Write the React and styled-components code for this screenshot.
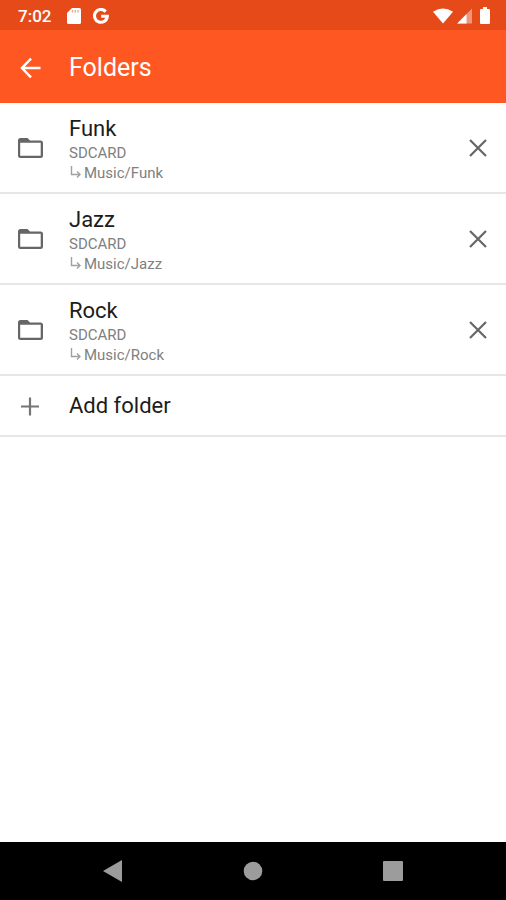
import React, { useState } from "react";
import styled, { createGlobalStyle } from "styled-components";

const GlobalStyle = createGlobalStyle`
  * {
    box-sizing: border-box;
  }
  body {
    margin: 0;
    font-family: Roboto, "Noto Sans", sans-serif;
    background-color: #fff;
  }
  button {
    padding: 0;
    border: none;
    background: none;
    font: inherit;
    color: inherit;
    cursor: pointer;
  }
  svg {
    display: block;
  }
`;

const Screen = styled.div`
  display: flex;
  flex-direction: column;
  min-height: 100vh;
`;
const StatusBar = styled.div`
  display: flex;
  align-items: center;
  height: 30px;
  padding: 1px 16px 0 18px;
  background-color: #e64a19;
  color: #fff;
`;
const Clock = styled.span`
  font-size: 17px;
  font-weight: 500;
  line-height: 20px;
  margin-right: 16px;
`;
const StatusIcons = styled.div`
  display: flex;
  align-items: center;
  gap: ${(props) => props.$gap}px;
`;
const Spacer = styled.div`
  flex: 1;
`;
const AppBar = styled.header`
  display: flex;
  align-items: center;
  height: 73px;
  padding: 2px 15px 0;
  background-color: #ff5722;
  color: #fff;
`;
const BackBtn = styled.button`
  width: 30px;
  height: 30px;
  margin-right: 24px;
`;
const Title = styled.h1`
  margin: 0;
  font-size: 25px;
  font-weight: 400;
  line-height: 32px;
`;
const List = styled.ul`
  flex: 1;
  margin: 0;
  padding: 0;
  list-style: none;
`;
const Row = styled.li`
  display: flex;
  align-items: center;
  height: 91px;
  padding: 0 12px 0 15px;
  border-bottom: 2px solid #e6e6e6;
  color: #666;
`;
const RowText = styled.div`
  flex: 1;
  margin-left: 24px;
  padding-top: 2px;
`;
const Name = styled.div`
  font-size: 22px;
  line-height: 28px;
  color: #1c1c1c;
`;
const Detail = styled.div`
  display: flex;
  align-items: center;
  font-size: 15px;
  line-height: 20px;
  color: #808080;
`;
const RemoveBtn = styled.button`
  width: 32px;
  height: 32px;
`;
const AddItem = styled.li`
  border-bottom: 2px solid #e6e6e6;
`;
const AddBtn = styled.button`
  display: flex;
  align-items: center;
  gap: 24px;
  width: 100%;
  height: 59px;
  padding: 0 15px;
  text-align: left;
  color: #757575;
`;
const NavBar = styled.nav`
  display: flex;
  align-items: center;
  justify-content: space-evenly;
  height: 58px;
  background-color: #000;
`;
const NavBtn = styled.button`
  display: flex;
  align-items: center;
  justify-content: center;
  width: 54px;
  height: 54px;
`;

function SdCardIcon() {
  return (
    <svg width="14" height="16" viewBox="0 0 14 16">
      <path d="M5 0h7.5Q14 0 14 1.5v13q0 1.5-1.5 1.5h-11Q0 16 0 14.5V5z" fill="#fff" />
      <path d="M5.500 2v2.500M8.200 2v2.500M11 2v2.500" stroke="#f0a68d" strokeWidth="1.4" />
    </svg>
  );
}

function GoogleIcon() {
  return (
    <svg width="16" height="16" viewBox="0 0 16 16" fill="none" stroke="#fff" strokeWidth="3.1">
      <path d="M12.700 3.600A6.400 6.400 0 1 0 14.300 8.300H8.200" />
    </svg>
  );
}

function WifiIcon() {
  return (
    <svg width="20" height="16" viewBox="0 0 20 16">
      <path d="M0 3.800Q10-2.600 20 3.800L10 15.500z" fill="#fff" />
    </svg>
  );
}

function SignalIcon() {
  return (
    <svg width="15" height="16" viewBox="0 0 15 16">
      <path d="M15 .5V15.500H.2z" fill="#f1967a" />
      <path d="M9.500 6V15.500H.2z" fill="#fff" />
    </svg>
  );
}

function BatteryIcon() {
  return (
    <svg width="10" height="17" viewBox="0 0 10 17">
      <path d="M3 0h4v2h2q1 0 1 1v13q0 1-1 1H1q-1 0-1-1V3q0-1 1-1h2z" fill="#fff" />
    </svg>
  );
}

function BackIcon() {
  return (
    <svg width="30" height="30" viewBox="0 0 30 30" fill="none" stroke="#fff" strokeWidth="2.5">
      <path d="M25.500 15H8M16 5.700L7 15l9 9.300" />
    </svg>
  );
}

function FolderIcon() {
  return (
    <svg width="30" height="30" viewBox="0 0 30 30">
      <path
        d="M5.500 5h7l2.500 2.500h10.500q2.500 0 2.500 2.500v12.500q0 2.500-2.500 2.500h-20q-2.500 0-2.500-2.500v-15q0-2.500 2.500-2.500zM5.200 9.700v13h20.500v-13z"
        fill="currentColor"
        fillRule="evenodd"
      />
    </svg>
  );
}

function CloseIcon() {
  return (
    <svg width="32" height="32" viewBox="0 0 32 32" stroke="currentColor" strokeWidth="2.2">
      <path d="M8 8l16 16M24 8L8 24" />
    </svg>
  );
}

function PlusIcon() {
  return (
    <svg width="30" height="30" viewBox="0 0 30 30" stroke="currentColor" strokeWidth="2.200">
      <path d="M15 6.500v18M6 15.500h18" />
    </svg>
  );
}

function SubPathIcon() {
  return (
    <svg width="15" height="14" viewBox="0 0 15 14" fill="none" stroke="#a0a0a0" strokeWidth="1.400">
      <path d="M2.500 0v8.500h8.500M8 5.500l3 3-3 3" />
    </svg>
  );
}

const initialFolders = [
  { name: "Funk", storage: "SDCARD", path: "Music/Funk" },
  { name: "Jazz", storage: "SDCARD", path: "Music/Jazz" },
  { name: "Rock", storage: "SDCARD", path: "Music/Rock" },
];

export default function App() {
  const [folders, setFolders] = useState(initialFolders);

  const removeFolder = (name) => {
    setFolders(folders.filter((folder) => folder.name !== name));
  };

  return (
    <Screen>
      <GlobalStyle />
      <StatusBar>
        <Clock>7:02</Clock>
        <StatusIcons $gap={12}>
          <SdCardIcon />
          <GoogleIcon />
        </StatusIcons>
        <Spacer />
        <StatusIcons $gap={4}>
          <WifiIcon />
          <SignalIcon />
          <Spacer />
          <BatteryIcon />
        </StatusIcons>
      </StatusBar>
      <AppBar>
        <BackBtn aria-label="Back">
          <BackIcon />
        </BackBtn>
        <Title>Folders</Title>
      </AppBar>
      <List>
        {folders.map((folder) => (
          <Row key={folder.name}>
            <FolderIcon />
            <RowText>
              <Name>{folder.name}</Name>
              <Detail>{folder.storage}</Detail>
              <Detail>
                <SubPathIcon />
                {folder.path}
              </Detail>
            </RowText>
            <RemoveBtn aria-label={`Remove ${folder.name}`} onClick={() => removeFolder(folder.name)}>
              <CloseIcon />
            </RemoveBtn>
          </Row>
        ))}
        <AddItem>
          <AddBtn>
            <PlusIcon />
            <Name>Add folder</Name>
          </AddBtn>
        </AddItem>
      </List>
      <NavBar>
        <NavBtn aria-label="Back">
          <svg width="20" height="22" viewBox="0 0 20 22">
            <path d="M0 11L19 0v22z" fill="#9c9c9c" />
          </svg>
        </NavBtn>
        <NavBtn aria-label="Home">
          <svg width="20" height="20" viewBox="0 0 20 20">
            <circle cx="10" cy="10" r="9.300" fill="#9c9c9c" />
          </svg>
        </NavBtn>
        <NavBtn aria-label="Recent apps">
          <svg width="20" height="20" viewBox="0 0 20 20">
            <rect width="20" height="20" rx="1" fill="#9c9c9c" />
          </svg>
        </NavBtn>
      </NavBar>
    </Screen>
  );
}
